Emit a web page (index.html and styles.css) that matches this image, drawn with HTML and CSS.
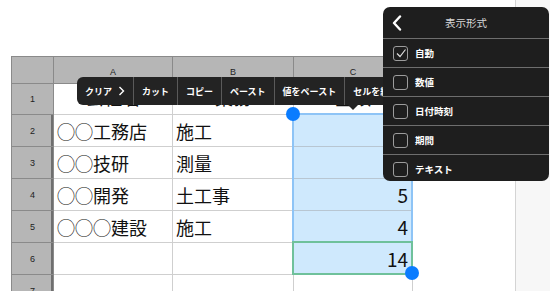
FILE: index.html
```html
<!doctype html>
<html lang="ja">
<head>
    <meta charset="UTF-8">
    <title>表示形式</title>
    <link rel="stylesheet" href="styles.css">
</head>
<body>
    <div class="page">
        <div class="sheet">
            <div class="grid">
                <div class="corner"></div>
                <div class="col-head">A</div>
                <div class="col-head">B</div>
                <div class="col-head">C</div>

                <div class="row-head">1</div>
                <div class="cell center top">会社名</div>
                <div class="cell center top">業務</div>
                <div class="cell center top">金額</div>

                <div class="row-head frozen">2</div>
                <div class="cell">◯◯工務店</div>
                <div class="cell">施工</div>
                <div class="cell num sel">12</div>

                <div class="row-head frozen">3</div>
                <div class="cell">◯◯技研</div>
                <div class="cell">測量</div>
                <div class="cell num sel">3</div>

                <div class="row-head frozen">4</div>
                <div class="cell">◯◯開発</div>
                <div class="cell">土工事</div>
                <div class="cell num sel">5</div>

                <div class="row-head frozen">5</div>
                <div class="cell">◯◯◯建設</div>
                <div class="cell">施工</div>
                <div class="cell num sel">4</div>

                <div class="row-head frozen">6</div>
                <div class="cell"></div>
                <div class="cell"></div>
                <div class="cell num sel">14</div>

                <div class="row-head frozen">7</div>
                <div class="cell"></div>
                <div class="cell"></div>
                <div class="cell"></div>

                <div class="selection"></div>
                <div class="active-cell"></div>
                <div class="handle handle-top"></div>
                <div class="handle handle-bottom"></div>
            </div>
        </div>
        <div class="side"></div>
    </div>

    <div class="edit-menu">
        <span class="menu-item">クリア<svg class="chev" width="7" height="10" viewBox="0 0 7 10"><polyline points="1.5,1 5.5,5 1.5,9" fill="none" stroke="#fff" stroke-width="1.4"/></svg></span>
        <span class="menu-item">カット</span>
        <span class="menu-item">コピー</span>
        <span class="menu-item">ペースト</span>
        <span class="menu-item">値をペースト</span>
        <span class="menu-item">セルを結合</span>
    </div>
    <div class="menu-arrow"></div>

    <div class="format-panel">
        <div class="panel-title">
            <svg class="back" width="10" height="16" viewBox="0 0 10 16"><polyline points="8,1.5 2,8 8,14.5" fill="none" stroke="#fff" stroke-width="2.4" stroke-linecap="round" stroke-linejoin="round"/></svg>
            <span>表示形式</span>
        </div>
        <div class="option">
            <span class="check"><svg width="12" height="12" viewBox="0 0 12 12"><polyline points="2,6.5 5,9.5 10.5,2.5" fill="none" stroke="#ddd" stroke-width="1.2"/></svg></span>
            自動
        </div>
        <div class="option"><span class="check"></span>数値</div>
        <div class="option"><span class="check"></span>日付時刻</div>
        <div class="option"><span class="check"></span>期間</div>
        <div class="option"><span class="check"></span>テキスト</div>
    </div>
</body>
</html>
```

FILE: styles.css
```css
* {
    box-sizing: border-box;
}
body {
    margin: 0;
    font-family: 'Liberation Sans', 'Noto Sans CJK JP', sans-serif;
    background-color: #fff;
    overflow: hidden;
}
.page {
    display: flex;
    height: 291px;
    overflow: hidden;
}
.sheet {
    flex: 1;
    padding: 56px 0 0 11px;
}
.side {
    width: 35px;
    background-color: #f7f7f7;
    border-left: 1px solid #d4d4d4;
}
.grid {
    position: relative;
    display: grid;
    grid-template-columns: 42px 119px 121px 119px;
    grid-template-rows: 27px 31px repeat(6, 32px);
    width: max-content;
    border-left: 1px solid #8a8a8a;
    border-top: 1px solid #8a8a8a;
}
.corner, .col-head, .row-head {
    background-color: #b6b6b6;
    border-right: 1px solid #8a8a8a;
    border-bottom: 1px solid #8a8a8a;
    color: #222;
    font-size: 9px;
    display: flex;
    align-items: center;
    justify-content: center;
}
.col-head {
    padding-top: 3px;
}
.row-head.frozen {
    box-shadow: inset -2px 0 0 #6f6f6f;
}
.cell {
    border-right: 1px solid #cfcfcf;
    border-bottom: 1px solid #cfcfcf;
    font-family: 'Noto Sans CJK JP', sans-serif;
    font-size: 18px;
    color: #111;
    display: flex;
    align-items: center;
    padding: 0 3px;
    white-space: nowrap;
    overflow: hidden;
}
.cell.center {
    justify-content: center;
}
.cell.top {
    padding-bottom: 5px;
}
.cell.num {
    justify-content: flex-end;
    padding-right: 4px;
    font-size: 19px;
}
.cell.sel {
    background-color: #cfe9fd;
    border-bottom-color: #b8c6d2;
}
.selection {
    position: absolute;
    left: 280px;
    top: 56px;
    width: 121px;
    height: 162px;
    border: 2px solid #8ec4f6;
}
.active-cell {
    position: absolute;
    left: 280px;
    top: 184px;
    width: 121px;
    height: 34px;
    border: 2px solid #6fc19b;
}
.handle {
    position: absolute;
    width: 14px;
    height: 14px;
    border-radius: 50%;
    background-color: #0a7cff;
}
.handle-top {
    left: 274px;
    top: 50px;
}
.handle-bottom {
    left: 393px;
    top: 209px;
}
.edit-menu {
    position: absolute;
    left: 77px;
    top: 77px;
    height: 28px;
    display: flex;
    background-color: #232323;
    border-radius: 6px;
    overflow: hidden;
}
.menu-item {
    display: flex;
    align-items: center;
    gap: 6px;
    padding: 0 8px;
    color: #fff;
    font-family: 'Noto Sans CJK JP', sans-serif;
    font-size: 9px;
    font-weight: bold;
    border-left: 1px solid #5a5a5a;
    white-space: nowrap;
}
.menu-item:first-child {
    border-left: none;
}
.menu-arrow {
    position: absolute;
    left: 347px;
    top: 104px;
    border-left: 6px solid transparent;
    border-right: 6px solid transparent;
    border-top: 6px solid #232323;
}
.format-panel {
    position: absolute;
    left: 383px;
    top: 7px;
    width: 166px;
    height: 174px;
    background-color: #1e1e1e;
    border-radius: 7px;
    overflow: hidden;
    font-family: 'Noto Sans CJK JP', sans-serif;
}
.panel-title {
    position: relative;
    height: 31px;
    display: flex;
    align-items: center;
    justify-content: center;
    color: #d8d8d8;
    font-size: 10.5px;
}
.back {
    position: absolute;
    left: 9px;
    top: 8px;
}
.option {
    height: 29px;
    border-top: 1px solid #6e6e6e;
    display: flex;
    align-items: center;
    gap: 7px;
    padding-left: 10px;
    color: #fff;
    font-size: 9.5px;
    font-weight: bold;
}
.check {
    width: 15px;
    height: 15px;
    border: 1px solid #9c9c9c;
    border-radius: 3px;
    display: flex;
    align-items: center;
    justify-content: center;
}
```
